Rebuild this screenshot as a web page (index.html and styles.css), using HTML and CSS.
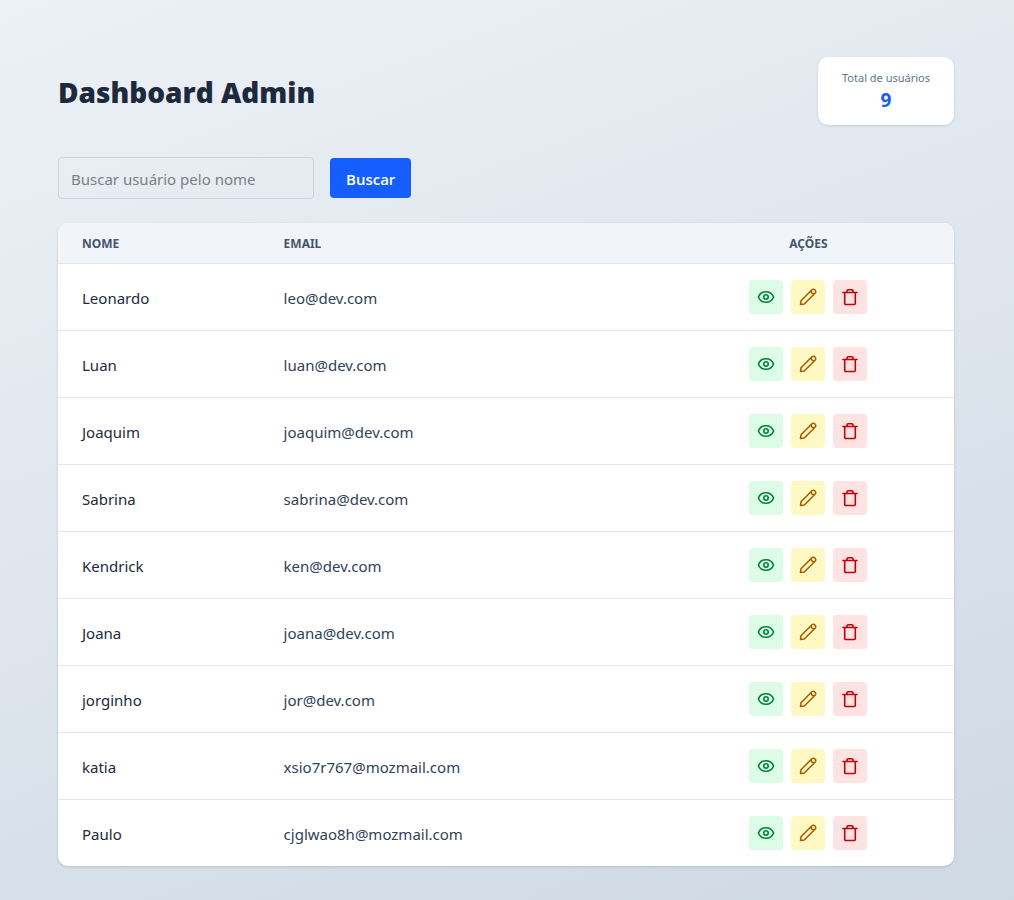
FILE: index.html
```html
<!DOCTYPE html>
<html lang="pt-BR">
<head>
<meta charset="utf-8">
<meta name="viewport" content="width=device-width, initial-scale=1">
<title>Dashboard Admin</title>
<link rel="stylesheet" href="styles.css">
</head>
<body>
<svg class="sprite" aria-hidden="true">
  <symbol id="eye" viewBox="0 0 18 18"><path d="M1.400 9C2.800 5.500 5.600 3.700 9 3.700S15.200 5.500 16.600 9C15.200 12.500 12.400 14.300 9 14.300S2.800 12.500 1.400 9Z"/><circle cx="9" cy="9" r="2.200"/></symbol>
  <symbol id="pencil" viewBox="0 0 18 18"><path d="M1.500 16.500l.5-3.800L12.700 2a2.300 2.300 0 0 1 3.300 0a2.300 2.300 0 0 1 0 3.300L5.300 16l-3.800.5ZM12.300 2.600c-.5 1.700 1.200 3.600 3.100 3.100"/></symbol>
  <symbol id="trash" viewBox="0 0 18 18"><path d="M2 4.500h14M3.700 4.500V15.500a1 1 0 0 0 1 1h8.600a1 1 0 0 0 1-1V4.500M6 4.500V3a1.300 1.300 0 0 1 1.300-1.300h3.400A1.300 1.300 0 0 1 12 3v1.500"/></symbol>
</svg>
<main class="page">
  <header class="header">
    <h1 class="title">Dashboard Admin</h1>
    <div class="stat"><p class="stat-label">Total de usuários</p><p class="stat-value">9</p></div>
  </header>
  <form class="search">
    <input class="search-input" type="text" placeholder="Buscar usuário pelo nome" aria-label="Buscar usuário pelo nome">
    <button class="search-button" type="button">Buscar</button>
  </form>
  <div class="card">
    <table class="users">
      <thead><tr><th class="col-name">Nome</th><th class="col-email">Email</th><th class="col-actions">Ações</th></tr></thead>
      <tbody id="rows"></tbody>
    </table>
  </div>
</main>
<script src="script.js"></script>
</body>
</html>
```
FILE: styles.css
```css
* { box-sizing: border-box; margin: 0; padding: 0; }
body {
  min-height: 100vh;
  padding: 57px 60px 34px 58px;
  background: linear-gradient(160deg, #ecf1f6, #cfd9e4);
  color: #1d293d;
  font: 15px/24px "Noto Sans", "Open Sans", sans-serif;
}
.sprite { display: none; }
.header { display: flex; justify-content: space-between; align-items: center; margin-bottom: 32px; }
.title { font: 800 28px/36px "Open Sans", sans-serif; padding-top: 2px; }
.stat { padding: 13px 24px 11px; border-radius: 10px; background: #fff; text-align: center; box-shadow: 0 1px 3px rgba(0, 0, 0, .12); }
.stat-label { color: #62748e; font-size: 11px; line-height: 16px; }
.stat-value { color: #155dfc; font-size: 19px; font-weight: 700; line-height: 28px; }
.search { display: flex; align-items: center; gap: 16px; margin-bottom: 24px; }
.search-input { width: 256px; height: 42px; padding: 2px 12px 0; border: 1px solid #cad5e2; border-radius: 4px; background: transparent; color: inherit; font: inherit; }
.search-input::placeholder { color: #7c7f84; opacity: 1; }
.search-button { height: 40px; padding: 2px 16px 0; border: 0; border-radius: 4px; background: #155dfc; color: #fff; font: 600 15px/24px "Open Sans", sans-serif; cursor: pointer; }
.card { overflow: hidden; border-radius: 10px; background: #fff; box-shadow: 0 1px 3px rgba(0, 0, 0, .14); }
.users { width: 100%; border-collapse: collapse; table-layout: fixed; }
.users th { height: 40px; padding: 2px 24px 0; background: #f1f5f9; color: #45556c; font-size: 12px; font-weight: 700; line-height: 16px; text-align: left; text-transform: uppercase; }
.users td { height: 67px; padding: 2px 24px 0; }
.users tr { border-bottom: 1px solid #e2e8f0; }
.users tbody tr:last-child { border-bottom: 0; }
.col-name { width: 22.5%; }
.users .col-actions { width: 32.5%; text-align: center; }
.email { color: #314158; }
.users .actions { padding: 0 24px; }
.action-list { display: flex; justify-content: center; gap: 8px; }
.action { display: grid; place-items: center; width: 34px; height: 34px; border: 0; border-radius: 4px; cursor: pointer; }
.action svg { width: 18px; height: 18px; fill: none; stroke: currentColor; stroke-width: 1.6; stroke-linecap: round; stroke-linejoin: round; }
.view { background: #dcfce7; color: #008236; }
.edit { background: #fef9c2; color: #a65f00; }
.delete { background: #ffe2e2; color: #c10007; }
```
FILE: script.js
```js
const users = [
  ["Leonardo", "leo@dev.com"], ["Luan", "luan@dev.com"], ["Joaquim", "joaquim@dev.com"],
  ["Sabrina", "sabrina@dev.com"], ["Kendrick", "ken@dev.com"], ["Joana", "joana@dev.com"],
  ["jorginho", "jor@dev.com"], ["katia", "xsio7r767@mozmail.com"], ["Paulo", "cjglwao8h@mozmail.com"]
];
const button = (kind, icon, label) =>
  `<button type="button" class="action ${kind}" aria-label="${label}"><svg aria-hidden="true"><use href="#${icon}"/></svg></button>`;
document.getElementById("rows").innerHTML = users.map(([name, email]) => `<tr>
  <td>${name}</td><td class="email">${email}</td>
  <td class="actions"><div class="action-list">${button("view", "eye", "Ver")}${button("edit", "pencil", "Editar")}${button("delete", "trash", "Excluir")}</div></td>
</tr>`).join("");
```
